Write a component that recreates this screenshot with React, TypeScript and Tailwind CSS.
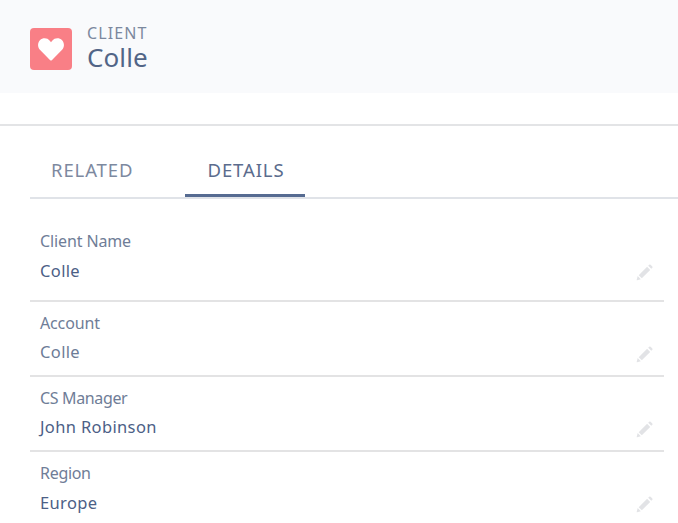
type Field = { label: string; value: string; tone: string; row: string; labelClass: string };

const fields: Field[] = [
  { label: 'Client Name', value: 'Colle', tone: 'text-[#4c6086]', row: 'h-[103px] pt-[31px]', labelClass: 'mb-[8px] tracking-[-0.12px]' },
  { label: 'Account', value: 'Colle', tone: 'text-[#6d7c97]', row: 'h-[75px] pt-[10px]', labelClass: 'mb-[7px] tracking-[-0.15px]' },
  { label: 'CS Manager', value: 'John Robinson', tone: 'text-[#4c6086]', row: 'h-[75px] pt-[10px]', labelClass: 'mb-[7px] tracking-[-0.35px]' },
  { label: 'Region', value: 'Europe', tone: 'text-[#4c6086]', row: 'h-[75px] pt-[10px]', labelClass: 'mb-[8px] tracking-[-0.3px]' },
];

function Heart() {
  return (
    <svg viewBox="0 0 26 23" className="h-[23px] w-[26px] fill-white" aria-hidden="true">
      <path d="M12.2 22.2 1.9 11.7C-.7 8.8-.4 4.6 1.9 2.2 4.8-.6 9.4-.3 11.8 2.7L13 4.3l1.2-1.6C16.6-.3 21.2-.6 24.1 2.2c2.3 2.4 2.6 6.6 0 9.5L13.8 22.2q-.8.8-1.6 0Z" />
    </svg>
  );
}

function Pencil() {
  return (
    <svg viewBox="0 0 17 17" className="h-[17px] w-[17px] fill-[#e2e3e6]" aria-hidden="true">
      <path d="m12.2 1.7 1-1q.7-.6 1.4 0l1.7 1.7q.6.7 0 1.4l-1 1Z" />
      <path d="m11.1 2.8 3.1 3.1-8.4 8.4-3.1-3.1Z" />
      <path d="m1.7 12.1 3.1 3.1-3.6 1.1q-.7.2-.5-.5Z" />
    </svg>
  );
}

export default function App() {
  return (
    <div className="h-[523px] w-[678px] overflow-hidden bg-white font-['Noto_Sans','Open_Sans',sans-serif]">
      <header className="flex h-[93px] items-start bg-[#f9fafc] pl-[30px]">
        <div className="mt-[28px] flex h-[42px] w-[42px] items-center justify-center rounded-[4px] bg-[#f97f86]">
          <Heart />
        </div>
        <div className="ml-[15px] pt-[23px]">
          <div className="text-[16px] leading-[20px] tracking-[1.1px] text-[#7c889e]">CLIENT</div>
          <h1 className="text-[26px] leading-[28px] tracking-[0.1px] text-[#526587]">Colle</h1>
        </div>
      </header>
      <div className="h-[33px] border-b-2 border-[#e3e4e6]" />
      <main className="pl-[30px]">
        <nav className="flex h-[73px] items-end border-b-2 border-[#e0e3e8] text-[18.5px] leading-[24px]">
          <button className="h-[56px] w-[155px] pl-[21px] pt-[2px] text-left tracking-[0.9px] text-[#7d899f]">RELATED</button>
          <button className="h-[56px] w-[120px] border-b-[3px] border-[#566b91] pl-[2px] pt-[4px] text-center tracking-[0.9px] text-[#5b6c8d]">
            DETAILS
          </button>
        </nav>
        <div className="w-[634px]">
          {fields.map((f) => (
            <section key={f.label} className={`${f.row} flex justify-between border-b-2 border-[#e3e3e4] pl-[10px] pr-[11px]`}>
              <div>
                <div className={`${f.labelClass} text-[16px] leading-[22px] text-[#6f7d97]`}>{f.label}</div>
                <div className={`${f.tone} text-[16.5px] leading-[22px] tracking-[0.36px]`}>{f.value}</div>
              </div>
              <div className="pt-[34px]">
                <Pencil />
              </div>
            </section>
          ))}
        </div>
      </main>
    </div>
  );
}
